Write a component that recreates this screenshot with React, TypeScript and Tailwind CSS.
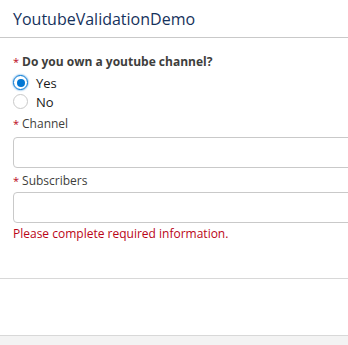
const Req = () => (
  <abbr className="mr-[3px] align-top text-[11px] font-normal text-[#ba0517] no-underline" title="required">
    *
  </abbr>
);

const Radio = ({ checked, label }: { checked?: boolean; label: string }) => (
  <label className="flex h-[19px] items-center gap-[8px]">
    <span
      className={
        checked
          ? "flex h-[15px] w-[15px] items-center justify-center rounded-full border border-[#0176d3] shadow-[0_0_2px_#0176d3]"
          : "flex h-[15px] w-[15px] items-center justify-center rounded-full border border-[#c9c9c9]"
      }
    >
      {checked && <span className="h-[8px] w-[8px] rounded-full bg-[#0176d3]" />}
    </span>
    <span className="text-[13px] text-[#181818]">{label}</span>
  </label>
);

export default function App() {
  return (
    <div className="h-[345px] w-[348px] overflow-hidden bg-white font-['Open_Sans',sans-serif]">
      <div className="flex h-[38px] items-center border-b border-[#c9c9c9] px-[13px]">
        <h1 className="text-[16px] text-[#16325c]">YoutubeValidationDemo</h1>
      </div>
      <div className="px-[13px] pt-[15px] leading-[18px]">
        <div className="text-[12px] font-bold text-[#3e3e3c]">
          <Req />
          Do you own a youtube channel?
        </div>
        <div className="mt-[2px] flex flex-col">
          <Radio checked label="Yes" />
          <Radio label="No" />
        </div>
        <div className="mt-[4px] text-[12px] text-[#3e3e3c]">
          <Req />
          Channel
        </div>
        <div className="mt-[4px] h-[31px] w-[400px] rounded-[4px] border border-[#c9c9c9]" />
        <div className="mt-[4px] text-[12px] text-[#3e3e3c]">
          <Req />
          Subscribers
        </div>
        <div className="mt-[2px] h-[31px] w-[400px] rounded-[4px] border border-[#c9c9c9]" />
        <div className="mt-[2px] text-[12px] text-[#ba0517]">Please complete required information.</div>
      </div>
      <div className="h-[36px] border-b border-[#d8d8d8]" />
      <div className="h-[57px] border-b border-[#d8d8d8]" />
      <div className="h-[20px] bg-[#f3f3f3]" />
    </div>
  );
}
